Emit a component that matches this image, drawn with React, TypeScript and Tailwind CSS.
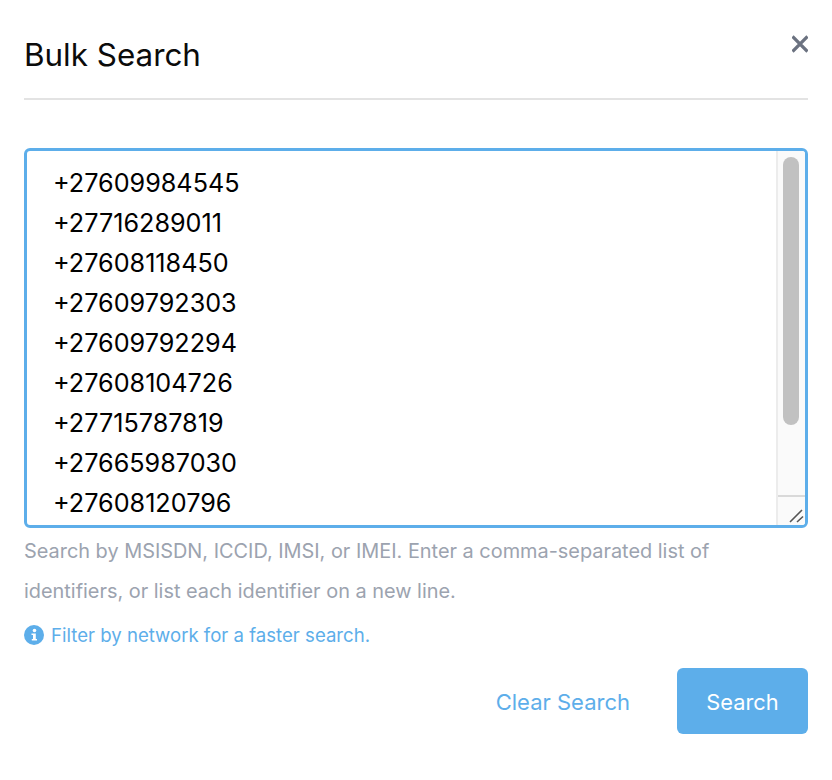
import React from "react";

const numbers = ["+27609984545","+27716289011","+27608118450","+27609792303","+27609792294","+27608104726","+27715787819","+27665987030","+27608120796"];

export default function App() {
  return (
    <div className="w-[832px] h-[780px] bg-white px-6 font-['Inter','Liberation_Sans',sans-serif] flex flex-col">
      <div className="relative h-[100px] border-b-2 border-[#e3e3e3] shrink-0">
        <h1 className="pt-[35px] text-[31.4px] leading-[40px] font-normal text-[#0b0b0b]">Bulk Search</h1>
        <button className="absolute right-0 top-[35px] text-[#6b7280]" aria-label="Close">
          <svg width="16" height="18" viewBox="0 0 16 18" className="block">
            <path d="M0.5 1.5 L15.5 16.5 M15.5 1.5 L0.5 16.5" stroke="currentColor" strokeWidth="3.2" fill="none" />
          </svg>
        </button>
      </div>

      <div className="mt-[48px] h-[380px] shrink-0 flex border-[3px] border-[#5daeea] rounded-md overflow-hidden">
        <div className="flex-1 pl-[26px] pt-[12px] text-[25.2px] leading-[40px] text-black overflow-hidden">
          {numbers.map((n) => (
            <div key={n}>{n}</div>
          ))}
        </div>
        <div className="w-[29px] flex flex-col bg-[#fafafa] border-l-2 border-[#ececec]">
          <div className="flex-1 px-[5px] pt-[6px]">
            <div className="h-[268px] w-[16px] rounded-full bg-[#c1c1c1]" />
          </div>
          <div className="h-[30px] border-t-2 border-[#d9d9d9] flex items-end justify-end">
            <svg width="16" height="16" viewBox="0 0 16 16" className="block">
              <path d="M1 13 L13 1 M8 13 L14 7.5" stroke="#555" strokeWidth="1.6" fill="none" />
            </svg>
          </div>
        </div>
      </div>

      <p className="mt-[3px] text-[19.9px] leading-[40px] text-[#9ca3af]">
        Search by MSISDN, ICCID, IMSI, or IMEI. Enter a comma-separated list of identifiers, or list each identifier on a new line.
      </p>

      <div className="mt-[9px] flex items-center gap-[7px] text-[#5daeea] text-[18.6px] leading-[30px]">
        <svg width="20" height="20" viewBox="0 0 20 20" className="block shrink-0">
          <circle cx="10" cy="10" r="10" fill="#5daeea" />
          <circle cx="10.5" cy="5.5" r="1.8" fill="#fff" />
          <path d="M7.5 8.5 H11.8 V14 H13 V15.5 H7.8 V14 H9 V10 H7.5 Z" fill="#fff" />
        </svg>
        <span>Filter by network for a faster search.</span>
      </div>

      <div className="mt-[18px] flex items-center justify-end gap-[47px]">
        <button className="pt-[3px] text-[22px] text-[#5daeea]">Clear Search</button>
        <button className="w-[131px] h-[66px] rounded-md bg-[#5daeea] text-white text-[21.8px] pt-[3px]">Search</button>
      </div>
    </div>
  );
}
